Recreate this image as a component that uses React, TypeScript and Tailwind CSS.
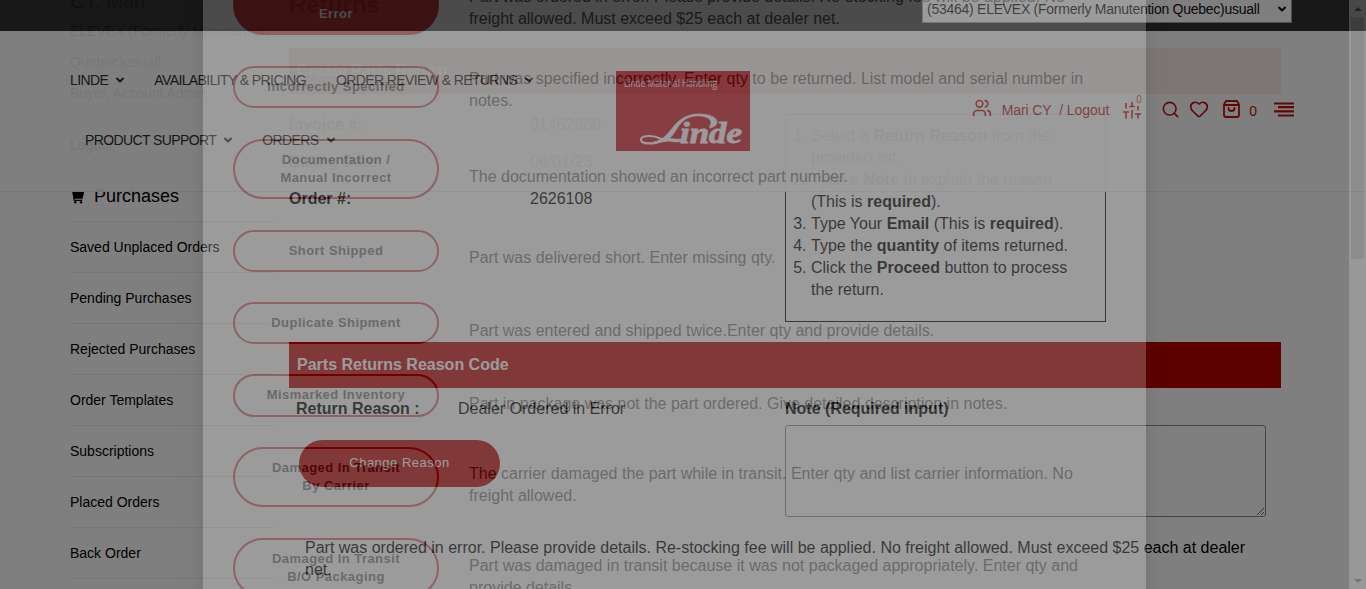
import React from "react";
import { ChevronDown, Users, Search, Heart } from "lucide-react";

const sideLinks = ["Saved Unplaced Orders", "Pending Purchases", "Rejected Purchases", "Order Templates", "Subscriptions", "Placed Orders", "Back Order"];

type Reason = { label: React.ReactNode; text: string; row: string; pad: string; active?: boolean };

const reasons: Reason[] = [
  { label: <>Dealer Ordered in<br />Error</>, text: "Part was ordered in error. Please provide details. Re-stocking fee will be applied. No freight allowed. Must exceed $25 each at dealer net.", row: "h-[91px]", pad: "pt-[11px]", active: true },
  { label: "Incorrectly Specified", text: "Part was specified incorrectly. Enter qty to be returned. List model and serial number in notes.", row: "h-[73px]", pad: "pt-[2px]" },
  { label: <>Documentation /<br />Manual Incorrect</>, text: "The documentation showed an incorrect part number.", row: "h-[91px]", pad: "pt-[27px]" },
  { label: "Short Shipped", text: "Part was delivered short. Enter missing qty.", row: "h-[72.4px]", pad: "pt-[17px]" },
  { label: "Duplicate Shipment", text: "Part was entered and shipped twice.Enter qty and provide details.", row: "h-[72.4px]", pad: "pt-[18px]" },
  { label: "Mismarked Inventory", text: "Part in package was not the part ordered. Give detailed description in notes.", row: "h-[72.4px]", pad: "pt-[19px]" },
  { label: <>Damaged In Transit<br />By Carrier</>, text: "The carrier damaged the part while in transit. Enter qty and list carrier information. No freight allowed.", row: "h-[91px]", pad: "pt-[16px]" },
  { label: <>Damaged In Transit<br />B/O Packaging</>, text: "Part was damaged in transit because it was not packaged appropriately. Enter qty and provide details.", row: "h-[91px]", pad: "pt-[17px]" },
];

function Sidebar() {
  return (
    <aside className="w-[204px] shrink-0 text-[14px]">
      <div className="-mt-[14px] h-[30px] text-[20px] leading-[30px]">CY, Mari</div>
      <div className="leading-[31px]">ELEVEX (Formerly Manutention Quebec)usuall</div>
      <div className="leading-[31px]">Buyer, Account Admin</div>
      <div className="mt-[21px] leading-[31px]">Logout</div>
      <div className="mt-[10px] flex h-[51px] items-center gap-[9px] border-b border-[#ececec] pt-[1px] text-[18px]">
        <CartIcon />
        Purchases
      </div>
      {sideLinks.map((l) => (
        <div key={l} className="flex h-[51px] items-center border-b border-[#ececec]">{l}</div>
      ))}
    </aside>
  );
}

function CartIcon() {
  return (
    <svg width="15" height="15" viewBox="0 0 15 15" fill="#000">
      <path d="M0.500 1h2.500l.6 1.700H14.200l-1.700 7H4.700l.2 1h7.400v1.200H3.800L2.100 2.200H.5z" />
      <circle cx="5.300" cy="13.300" r="1.200" />
      <circle cx="11" cy="13.300" r="1.200" />
    </svg>
  );
}

function Band({ children }: { children: React.ReactNode }) {
  return <div className="flex h-[46px] items-center bg-[#bc0000] px-2 font-bold text-white">{children}</div>;
}

function Field({ name, value }: { name: string; value: string }) {
  return (
    <div className="flex h-[37px] items-center">
      <b className="w-[241px]">{name}</b>
      <span>{value}</span>
    </div>
  );
}

function Page() {
  return (
    <div className="flex h-[589px] overflow-hidden pl-[70px]">
      <Sidebar />
      <main className="ml-[15px] w-[992px] shrink-0 leading-[22px]">
        <h1 className="-mt-[10px] h-[58px] text-[24px] font-bold leading-[30px]">Returns</h1>
        <Band>Create Parts Return</Band>
        <div className="flex h-[248px]">
          <div className="w-[496px] pt-[12px]">
            <Field name="Invoice #:" value="91462960" />
            <Field name="Billing Date:" value="06/01/23" />
            <Field name="Order #:" value="2626108" />
          </div>
          <ol className="mt-[20px] h-[208px] w-[321px] list-decimal border border-black pl-[25px] pr-[30px] pt-[10px]">
            <li>Select a <b>Return Reason</b> from the provided list.</li>
            <li>Type a <b>Note</b> to explain the reason (This is <b>required</b>).</li>
            <li>Type Your <b>Email</b> (This is <b>required</b>).</li>
            <li>Type the <b>quantity</b> of items returned.</li>
            <li>Click the <b>Proceed</b> button to process the return.</li>
          </ol>
        </div>
        <Band>Parts Returns Reason Code</Band>
        <div className="flex h-[149px] pt-[10px]">
          <div className="w-[496px] pl-[7px]">
            <div className="flex">
              <b className="w-[162px]">Return Reason :</b>
              <span>Dealer Ordered in Error</span>
            </div>
            <div className="ml-[3px] mt-[20px] flex h-[47px] w-[201px] items-center justify-center rounded-full bg-[#bc0000] pb-[1px] text-[13px] tracking-[0.5px] text-white">Change Reason</div>
          </div>
          <div>
            <b className="block h-[27px]">Note (Required input)</b>
            <textarea className="block h-[92px] w-[481px] resize rounded-[3px] border border-[#8a8a8a]" />
          </div>
        </div>
        <p className="w-[970px] pl-4">Part was ordered in error. Please provide details. Re-stocking fee will be applied. No freight allowed. Must exceed $25 each at dealer net.</p>
      </main>
    </div>
  );
}

function NavItem({ children, menu = true }: { children: React.ReactNode; menu?: boolean }) {
  return (
    <span className="flex items-center gap-[6px] whitespace-nowrap">
      {children}
      {menu && <ChevronDown size={12} strokeWidth={4} />}
    </span>
  );
}

function Logo() {
  return (
    <svg width="134" height="80" viewBox="0 0 134 80">
      <rect width="134" height="80" fill="#c8000a" />
      <text x="8" y="16" fontSize="10" fill="#fff" textLength="93" lengthAdjust="spacingAndGlyphs" fontFamily="Open Sans, sans-serif">Linde Material Handling</text>
      <path d="M94 57C98 56 101 54 101 51C101 46 92 43 83 43C68 43 61 51 54 60C50 65 46 69 37 71.500C42 73 47 70 52 70C57 70 60 72 66 70L66 68C61 69 57 67.500 53 67.500C61 62 62 47 79 45C87 44 96 47 95 52C95 54 93 55 94 57Z" fill="#fff" stroke="#fff" strokeWidth=".8" />
      <path d="M44 70C39 73 25 74 25 68.500C25 64 38 64 44 67.500L50 70" fill="none" stroke="#fff" strokeWidth="2.200" />
      <text x="64" y="72" fontSize="29" fontWeight="700" fontStyle="italic" fill="#fff" stroke="#fff" strokeWidth=".8" textLength="62" lengthAdjust="spacingAndGlyphs" fontFamily="Liberation Serif, serif">inde</text>
    </svg>
  );
}

function BagIcon() {
  return (
    <svg className="mb-[2px] ml-[14px]" width="17" height="18" viewBox="0 0 17 18" fill="none" stroke="#bc0000" strokeWidth="1.800" strokeLinecap="round" strokeLinejoin="round">
      <path d="M3 1H14L16 4.500V15Q16 17 14 17H3Q1 17 1 15V4.500ZM1.500 5H15.500M5.500 8Q5.500 11 8.500 11Q11.500 11 11.500 8" />
    </svg>
  );
}

function SlidersIcon() {
  return (
    <svg width="18" height="18" viewBox="0 0 18 18" fill="none" stroke="#bc0000" strokeWidth="1.600">
      <path d="M3 17.500V11M3 7.500V2M9 17.500V9M9 5.500V1M15 17.500V13M15 9.500V5M0 11H6M6.300 5.500H11.700M12 13H18" />
    </svg>
  );
}

function Header() {
  return (
    <header className="absolute inset-x-0 top-0 flex h-[192px] flex-col border-b border-[#ececec] bg-white opacity-[.93]">
      <div className="flex h-[31px] shrink-0 justify-end bg-[#222] pr-[74px]">
        <div className="-mt-[6px] flex h-[29px] w-[370px] items-center justify-between border border-[#999] bg-white pl-[4px] pr-[3px] pt-[1px] text-[14px] tracking-[-0.26px]">
          <span>(53464) ELEVEX (Formerly Manutention Quebec)usuall</span>
          <ChevronDown size={12} strokeWidth={4} />
        </div>
      </div>
      <div className="flex flex-1 justify-between pl-[70px] pr-[72px]">
        <nav className="flex w-[546px] flex-wrap content-start gap-x-[28px] pt-[39px] text-[14px] leading-[20px] tracking-[-0.6px] text-[#222]">
          <NavItem>LINDE</NavItem>
          <NavItem menu={false}>AVAILABILITY &amp; PRICING</NavItem>
          <span className="ml-[2px]"><NavItem>ORDER REVIEW &amp; RETURNS</NavItem></span>
          <div className="mt-[40px] flex w-full gap-[28px] pl-[15px]">
            <NavItem>PRODUCT SUPPORT</NavItem>
            <NavItem>ORDERS</NavItem>
          </div>
        </nav>
        <div className="pt-[40px]"><Logo /></div>
        <div className="ml-auto mt-[59px] flex h-[40px] items-center text-[14px] text-[#bc0000]">
          <Users className="mb-[4px]" size={20} strokeWidth={2} />
          <span className="ml-[10px] tracking-[-0.08px]">Mari CY&nbsp; / Logout</span>
          <span className="relative ml-[14px]">
            <SlidersIcon />
            <span className="absolute -top-[9px] left-[13px] text-[10px] text-[#c84a00]">0</span>
          </span>
          <Search className="mb-[1px] ml-[20px]" size={19} />
          <Heart className="mb-[3px] ml-[9px]" size={20} />
          <BagIcon />
          <span className="ml-[9px] mt-[3px]">0</span>
          <svg className="mb-[1px] ml-[17px]" width="20" height="15" stroke="#bc0000" strokeWidth="2.200"><path d="M0 1.500H20M4 5.200H20M0 9.300H20M4 13.500H20" /></svg>
        </div>
      </div>
    </header>
  );
}

function ReasonDialog() {
  return (
    <div className="absolute inset-0 flex overflow-hidden opacity-[.22]">
      <div className="ml-[203px] h-[700px] w-[943px] bg-white pl-[30px] text-[#212121] shadow-[0_5px_15px_rgba(0,0,0,0.5)]">
        <div className="-mt-[25.4px]">
          {reasons.map((r) => (
            <div key={r.text} className={"flex items-start gap-[30px] " + r.row}>
              <button className={"w-[206px] shrink-0 rounded-[30px] border-2 border-[#ba0000] py-[10px] text-center text-[13px] font-bold leading-[18.2px] tracking-[0.45px] " + (r.active ? "bg-[#ba0000] text-white" : "")}>{r.label}</button>
              <p className={"w-[640px] leading-[22px] " + r.pad}>{r.text}</p>
            </div>
          ))}
        </div>
      </div>
      <div className="ml-auto flex h-[589px] w-[17px] flex-col items-center bg-[#f1f1f1]">
        <div className="flex h-[17px] items-center"><svg width="8" height="4"><path d="M4 0L8 4H0z" fill="#505050" /></svg></div>
        <div className="h-[242px] w-[13px] bg-[#c1c1c1]" />
        <div className="mt-auto flex h-[17px] items-center"><svg width="8" height="4"><path d="M0 0H8L4 4z" fill="#505050" /></svg></div>
      </div>
    </div>
  );
}

export default function App() {
  return (
    <div className="relative h-[589px] w-full overflow-hidden bg-white font-['Liberation_Sans',Arial,sans-serif] text-[16px] text-black">
      <Page />
      <Header />
      <div className="absolute inset-0 bg-black/50" />
      <ReasonDialog />
    </div>
  );
}
